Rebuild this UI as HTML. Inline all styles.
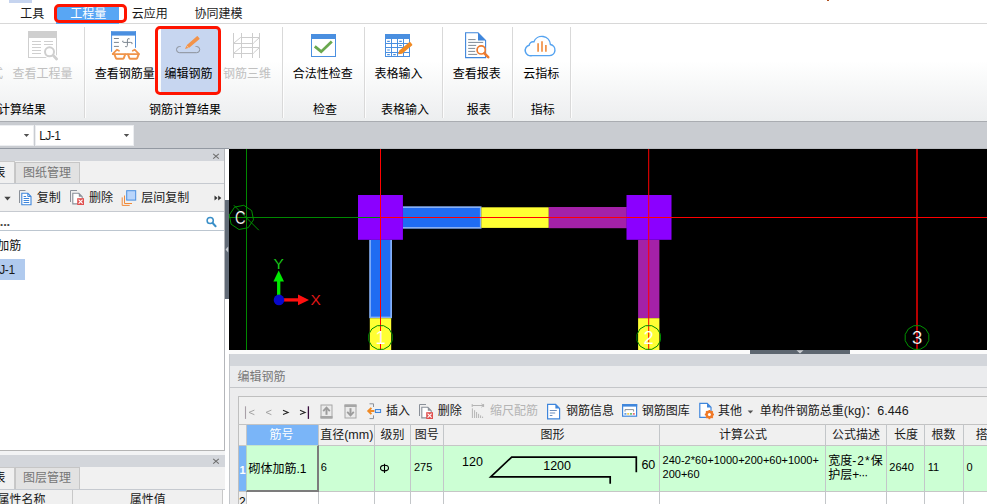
<!DOCTYPE html>
<html lang="zh-CN">
<head>
<meta charset="utf-8">
<title>编辑钢筋</title>
<style>
html,body{margin:0;padding:0;background:#fff;}
body{width:987px;height:504px;overflow:hidden;position:relative;font-family:"Liberation Sans","Noto Sans CJK SC",sans-serif;}
#app{position:absolute;left:0;top:0;width:987px;height:504px;overflow:hidden;background:#fff;}
.b{position:absolute;}
.i{position:absolute;overflow:visible;}
.t{position:absolute;white-space:nowrap;font-family:"Liberation Sans","Noto Sans CJK SC",sans-serif;}
</style>
</head>
<body>
<div id="app">
<!-- tab bar -->
<div class="b" style="left:0px;top:0px;width:987px;height:23px;background:#fff;"></div>
<div class="b" style="left:9px;top:0px;width:23px;height:2.5px;background:#c6d4ef;"></div>
<div class="b" style="left:827px;top:0px;width:2px;height:1px;background:#b0501e;"></div>
<div class="b" style="left:0px;top:23px;width:987px;height:1px;background:#d8d8d8;"></div>
<div class="t" style="left:20.2px;top:8px;font-size:12px;line-height:12px;height:12px;color:#1a1a1a;">工具</div>
<div class="b" style="left:56px;top:5px;width:63px;height:19px;background:#58a6f4;"></div>
<div class="t" style="left:70.2px;top:8px;font-size:12px;line-height:12px;height:12px;color:#fff;">工程量</div>
<div class="b" style="left:54px;top:4px;width:73px;height:19px;background:transparent;border:3px solid #ff1400;border-radius:5px;box-sizing:border-box"></div>
<div class="t" style="left:131.8px;top:8px;font-size:12px;line-height:12px;height:12px;color:#1a1a1a;">云应用</div>
<div class="t" style="left:194.4px;top:8px;font-size:12px;line-height:12px;height:12px;color:#1a1a1a;">协同建模</div>
<!-- ribbon -->
<div class="b" style="left:0px;top:24px;width:987px;height:97px;background:linear-gradient(to bottom,#ffffff 0%,#ffffff 38%,#f8f9f9 60%,#f2f3f4 80%,#eceeef 100%);"></div>
<div class="b" style="left:84px;top:27px;width:1px;height:91px;background:#d9d9d9;"></div>
<div class="b" style="left:85px;top:27px;width:1px;height:91px;background:rgba(255,255,255,.8);"></div>
<div class="b" style="left:282px;top:27px;width:1px;height:91px;background:#d9d9d9;"></div>
<div class="b" style="left:283px;top:27px;width:1px;height:91px;background:rgba(255,255,255,.8);"></div>
<div class="b" style="left:364px;top:27px;width:1px;height:91px;background:#d9d9d9;"></div>
<div class="b" style="left:365px;top:27px;width:1px;height:91px;background:rgba(255,255,255,.8);"></div>
<div class="b" style="left:442px;top:27px;width:1px;height:91px;background:#d9d9d9;"></div>
<div class="b" style="left:443px;top:27px;width:1px;height:91px;background:rgba(255,255,255,.8);"></div>
<div class="b" style="left:512px;top:27px;width:1px;height:91px;background:#d9d9d9;"></div>
<div class="b" style="left:513px;top:27px;width:1px;height:91px;background:rgba(255,255,255,.8);"></div>
<div class="b" style="left:570px;top:27px;width:1px;height:91px;background:#d9d9d9;"></div>
<div class="b" style="left:571px;top:27px;width:1px;height:91px;background:rgba(255,255,255,.8);"></div>
<div class="b" style="left:0px;top:120.5px;width:987px;height:1.5px;background:#a9acb1;"></div>
<div class="b" style="left:0px;top:122px;width:987px;height:27px;background:#c9ccd1;"></div>
<div class="t" style="left:-1.9px;top:104px;font-size:12px;line-height:12px;height:12px;color:#000;">计算结果</div>
<div class="t" style="left:149px;top:104px;font-size:12px;line-height:12px;height:12px;color:#000;">钢筋计算结果</div>
<div class="t" style="left:313px;top:104px;font-size:12px;line-height:12px;height:12px;color:#000;">检查</div>
<div class="t" style="left:381px;top:104px;font-size:12px;line-height:12px;height:12px;color:#000;">表格输入</div>
<div class="t" style="left:466.8px;top:104px;font-size:12px;line-height:12px;height:12px;color:#000;">报表</div>
<div class="t" style="left:530.8px;top:104px;font-size:12px;line-height:12px;height:12px;color:#000;">指标</div>
<div class="t" style="left:-9px;top:68px;font-size:12px;line-height:12px;height:12px;color:#c0c0c0;">式</div>
<div class="t" style="left:12.6px;top:68px;font-size:12px;line-height:12px;height:12px;color:#c0c0c0;">查看工程量</div>
<svg class="i" style="left:26px;top:29px;" width="34" height="33" viewBox="0 0 34 33">
<g fill="none" stroke="#cfcfcf" stroke-width="1">
<rect x="2.5" y="2.5" width="28" height="26" fill="#fff"/>
<rect x="2.5" y="2.5" width="28" height="6" fill="#cfcfcf"/>
<path d="M6 12.5h9M6 15.5h9M6 18.5h9M6 21.5h9M6 24.5h9M18 12.5h9M18 15.5h9"/>
<circle cx="23.5" cy="22.8" r="6.6" fill="#fff" stroke="none"/>
<path d="M27 26.2l4.6 4.8" stroke="#fff" stroke-width="5" stroke-linecap="round"/>
<circle cx="23.5" cy="22.8" r="4.5" fill="#fff" stroke-width="2"/>
<path d="M27.2 26.4l3.4 3.6" stroke-width="2.8" stroke-linecap="round"/>
</g></svg>
<div class="t" style="left:94.8px;top:68px;font-size:12px;line-height:12px;height:12px;color:#000;">查看钢筋量</div>
<svg class="i" style="left:108px;top:29px;" width="36" height="34" viewBox="0 0 36 34">
<rect x="3.1" y="2.2" width="24.9" height="4.4" fill="#4a8fe0"/>
<path d="M3.6 2.2V22.8M27.5 2.2V18.8" stroke="#4a8fe0" stroke-width="1" fill="none"/>
<path d="M5.9 9.5h5M5.9 13.4h5M5.9 17.4h5" stroke="#7d8791" stroke-width="1" fill="none"/>
<path d="M21.3 9.7q-1.9-.8-1.9 1.3V16.4q0 2.1-1.9 1.3M14.7 12q-.8 1.4 1.3 1.4H22.8q2.1 0 1.3 1.4" stroke="#7d8791" stroke-width="1" fill="none" stroke-linecap="round"/>
<g fill="none" stroke="#f0944a" stroke-width="1.9" stroke-linejoin="round" stroke-linecap="round">
<path d="M4.8 25.1H30.8"/>
<path d="M6.4 25.4L7.9 29.1q.3.7 1.1.7h5.7q.8 0 1.1-.7L17.2 25.4"/>
<path d="M20 25.4L21.4 29.1q.3.7 1.1.7h5.6q.8 0 1.1-.7L30.6 25.4"/>
<path d="M4.8 24.8L9 20.7L11 21.8M30.8 24.8L26.7 20.7L24.7 21.8" stroke-width="1.7"/>
</g></svg>
<div class="b" style="left:161px;top:27px;width:56.6px;height:66px;background:#c7d6f0;"></div>
<div class="t" style="left:164.6px;top:68px;font-size:12px;line-height:12px;height:12px;color:#000;">编辑钢筋</div>
<svg class="i" style="left:172px;top:34px;" width="34" height="22" viewBox="0 0 34 22">
<path d="M8.6 12.5h-1a3.1 3.1 0 0 0 0 6.2h17a3.1 3.1 0 0 0 0-6.2h-1" fill="none" stroke="#8a9099" stroke-width="1"/>
<path d="M12.9 15l2-4.1 10-8.6a.7.7 0 0 1 1 .1l1.5 1.8a.7.7 0 0 1-.1 1l-10.1 8.5z" fill="#f2934a"/><path d="M14.6 11.6l2 2.3" stroke="#fbd9bd" stroke-width=".7"/>
</svg>
<div class="b" style="left:155px;top:26px;width:66px;height:69px;background:transparent;border:3px solid #ff1400;border-radius:5px;box-sizing:border-box"></div>
<div class="t" style="left:223px;top:68px;font-size:12px;line-height:12px;height:12px;color:#c0c0c0;">钢筋三维</div>
<svg class="i" style="left:230px;top:31px;" width="34" height="29" viewBox="0 0 34 29">
<g fill="none" stroke="#cdcdcd" stroke-width="1">
<path d="M3.5 2v25M11.5 2v25M22.5 2v25M29.5 2v25"/>
<path d="M10.5 6.5h19M3.5 12.5h20M10.5 16.5h19M3.5 22.5h20" stroke-width="1.2"/>
<path d="M4 12l6.5-5.5M23.5 12l6-5.5M4 22l6.5-5.5M23.5 22l6-5.5" stroke-width="1"/>
</g></svg>
<div class="t" style="left:292.8px;top:68px;font-size:12px;line-height:12px;height:12px;color:#000;">合法性检查</div>
<svg class="i" style="left:309px;top:32px;" width="30" height="27" viewBox="0 0 30 27">
<rect x="2.5" y="2.5" width="24" height="22" fill="#fff" stroke="#4a8fe0"/>
<rect x="2" y="2" width="25" height="5" fill="#4a8fe0"/>
<path d="M5.8 14.4l6.4 5.3 10.6-10.2" fill="none" stroke="#6aa84f" stroke-width="2.8"/>
</svg>
<div class="t" style="left:374.6px;top:68px;font-size:12px;line-height:12px;height:12px;color:#000;">表格输入</div>
<svg class="i" style="left:383px;top:32px;" width="32" height="27" viewBox="0 0 32 27">
<rect x="2.5" y="2.5" width="24" height="22" fill="#fff" stroke="#4a8fe0"/>
<rect x="2" y="2" width="25" height="5" fill="#4a8fe0"/>
<path d="M8.5 7v18M14.5 7v18M20.5 7v18M2 11.5h25M2 15.5h25M2 20.5h25" stroke="#4a8fe0" stroke-width="1" fill="none"/>
<path d="M4.2 9.3h2.6M16.2 9.3h2.6M16.2 13.5h2.6M4.2 18h2.6M4.2 22.6h2.6M10.2 22.6h2.6" stroke="#4a8fe0" stroke-width="1.2" fill="none"/>
<path d="M15 22.3l1.3-3.9 9.9-8.2a.9.9 0 0 1 1.3.1l1.6 1.9a.9.9 0 0 1-.1 1.3l-9.9 8.2z" fill="#f08a24"/>
</svg>
<div class="t" style="left:452.8px;top:68px;font-size:12px;line-height:12px;height:12px;color:#000;">查看报表</div>
<svg class="i" style="left:463px;top:30px;" width="30" height="31" viewBox="0 0 30 31">
<path d="M2.6 2.8h12.4l7.6 7.6v17.2h-20z" fill="#fff" stroke="#3f86dc" stroke-width="1.1"/>
<path d="M15 2.8l7.6 7.6h-7.6z" fill="#3f86dc"/>
<path d="M5.2 9.6h7.4M5.2 12.4h15M5.2 15.4h8M5.2 18.4h7M5.2 21.4h7M5.2 24.4h9" stroke="#7f8a96" stroke-width="1" fill="none"/>
<circle cx="18.2" cy="19.9" r="4.1" fill="#fff" stroke="#ee7b2e" stroke-width="1.7"/>
<path d="M21.4 23.3l3.8 3.9" stroke="#ee7b2e" stroke-width="2.6" stroke-linecap="round"/>
</svg>
<div class="t" style="left:523.2px;top:68px;font-size:12px;line-height:12px;height:12px;color:#000;">云指标</div>
<svg class="i" style="left:522px;top:32px;" width="36" height="27" viewBox="0 0 36 27">
<path d="M10 23.6h17.2a5.6 5.6 0 0 0 1.2-11.1a8.6 8.6 0 0 0-16.6-2.6a3.7 3.7 0 0 0-4.6 3.3a5.3 5.3 0 0 0 2.8 10.4z" fill="#fff" stroke="#55a3f0" stroke-width="1.45"/>
<path d="M16.1 11.2v8.6M20 9.2v10.6M23.9 13v6.8" stroke="#f08a3a" stroke-width="1.6" fill="none"/>
</svg>
<!-- selector row -->
<div class="b" style="left:-2px;top:124.5px;width:36px;height:21.7px;background:#fff;border:1px solid #eceef1;box-sizing:border-box"></div>
<div class="b" style="left:35.4px;top:124.5px;width:99px;height:21.7px;background:#fff;border:1px solid #eceef1;box-sizing:border-box"></div>
<svg class="i" style="left:23px;top:133px;" width="7" height="5" viewBox="0 0 7 5"><path d="M0.8 0.9h5.4L3.5 4.1z" fill="#505050"/></svg>
<svg class="i" style="left:122.9px;top:133px;" width="7" height="5" viewBox="0 0 7 5"><path d="M0.8 0.9h5.4L3.5 4.1z" fill="#505050"/></svg>
<div class="t" style="left:39.2px;top:129.5px;font-size:12px;line-height:12px;height:12px;color:#1a1a1a;letter-spacing:-0.5px">LJ-1</div>
<!-- left panel -->
<div class="b" style="left:0px;top:148px;width:229px;height:1px;background:#9399a2;"></div>
<div class="b" style="left:229px;top:148px;width:758px;height:1px;background:#b9bcc1;"></div>
<div class="b" style="left:0px;top:149px;width:229px;height:355px;background:#fff;"></div>
<div class="b" style="left:0px;top:149px;width:224.5px;height:12px;background:#d3d6db;"></div>
<svg class="i" style="left:212px;top:151.5px;" width="8" height="8" viewBox="0 0 8 8"><path d="M1.2 1.8l5.6 4.8M6.8 1.8l-5.6 4.8" stroke="#6e6e6e" stroke-width="1.1" fill="none"/></svg>
<div class="b" style="left:0px;top:161px;width:224.5px;height:22.5px;background:#f1f1f1;"></div>
<div class="b" style="left:-2px;top:161px;width:16.5px;height:23px;background:#f0f0f0;border:1px solid #c8c8c8;box-sizing:border-box"></div>
<div class="b" style="left:14.5px;top:161.5px;width:65.5px;height:22px;background:#e2e2e2;border:1px solid #c6c6c6;border-bottom:none;box-sizing:border-box"></div>
<div class="t" style="left:-6.4px;top:166.5px;font-size:12px;line-height:12px;height:12px;color:#000;">表</div>
<div class="t" style="left:23px;top:166.5px;font-size:12px;line-height:12px;height:12px;color:#767676;">图纸管理</div>
<div class="b" style="left:0px;top:183px;width:224.5px;height:1px;background:#c6cad0;"></div>
<div class="b" style="left:0px;top:184px;width:224.5px;height:27.5px;background:#f0f0f0;"></div>
<div class="b" style="left:0px;top:211px;width:224.5px;height:1px;background:#c6cad0;"></div>
<div class="b" style="left:0px;top:212px;width:224.5px;height:18.5px;background:#fff;"></div>
<div class="b" style="left:0px;top:230px;width:224.5px;height:1px;background:#bcc6d0;"></div>
<div class="b" style="left:0px;top:231px;width:224.5px;height:219px;background:#fff;"></div>
<div class="b" style="left:0px;top:450px;width:224.5px;height:1px;background:#b4b4b4;"></div>
<div class="b" style="left:224px;top:149px;width:1px;height:355px;background:#b4b6ba;"></div>
<div class="b" style="left:225px;top:200px;width:4px;height:99.4px;background:#626b77;"></div>
<svg class="i" style="left:225px;top:246px;" width="4" height="7" viewBox="0 0 4 7"><path d="M3.2 0.5L0.6 3.5L3.2 6.5z" fill="#c9ccd1"/></svg>
<svg class="i" style="left:4px;top:196px;" width="7" height="5" viewBox="0 0 7 5"><path d="M0.3 0.8h6.4L3.5 4.4z" fill="#444"/></svg>
<svg class="i" style="left:18px;top:189px;" width="15" height="17" viewBox="0 0 15 17">
<path d="M1.5 14V1.5h6" fill="none" stroke="#8a9099" stroke-width="1"/>
<path d="M3.8 4.3h6l3.2 3.2v8.2h-9.2z" fill="#fff" stroke="#3f86dc" stroke-width="1.1"/>
<path d="M9.8 4.3v3.2h3.2" fill="none" stroke="#3f86dc" stroke-width="1"/>
<path d="M5.6 9.5h5.6M5.6 11.5h5.6M5.6 13.5h5.6M5.6 7.5h2.5" stroke="#3f86dc" stroke-width="1" fill="none"/>
</svg>
<div class="t" style="left:36.8px;top:192.3px;font-size:12px;line-height:12px;height:12px;color:#1a1a1a;">复制</div>
<svg class="i" style="left:69px;top:189px;" width="16" height="17" viewBox="0 0 16 17">
<path d="M1.5 13V1.5h6.5" fill="none" stroke="#8a9099" stroke-width="1"/>
<path d="M3.8 4.3h6l3.4 3.4v7.2h-9.4z" fill="#fff" stroke="#8a9099" stroke-width="1.1"/>
<path d="M9.8 4.3v3.4h3.4z" fill="#8a9099"/>
<rect x="8.2" y="9.2" width="6.8" height="6.8" fill="#e0504f"/>
<path d="M9.6 10.6l4 4M13.6 10.6l-4 4" stroke="#fff" stroke-width="1.1"/>
</svg>
<div class="t" style="left:88.9px;top:192.3px;font-size:12px;line-height:12px;height:12px;color:#1a1a1a;">删除</div>
<svg class="i" style="left:121px;top:189px;" width="16" height="17" viewBox="0 0 16 17">
<path d="M3.5 6.5v8h7.5M1.2 8.4v8h7.5" fill="none" stroke="#f08a3a" stroke-width="1"/>
<rect x="5.7" y="1.7" width="9" height="9.4" fill="#b9d5fb" stroke="#4a8fe0" stroke-width="1"/>
</svg>
<div class="t" style="left:141.2px;top:192.3px;font-size:12px;line-height:12px;height:12px;color:#1a1a1a;">层间复制</div>
<svg class="i" style="left:213.5px;top:194.5px;" width="8" height="6" viewBox="0 0 8 6"><path d="M0.5 0.4L3.6 3L0.5 5.6zM4.2 0.4L7.3 3L4.2 5.6z" fill="#333"/></svg>
<div class="t" style="left:-0.2px;top:214.8px;font-size:13px;line-height:13px;height:13px;color:#4a4a4a;font-weight:bold;letter-spacing:-0.25px">...</div>
<svg class="i" style="left:205px;top:215px;" width="13" height="13" viewBox="0 0 13 13">
<circle cx="5.2" cy="5.5" r="3.1" fill="none" stroke="#3a8fc8" stroke-width="1.5"/>
<path d="M7.6 8l3 3.2" stroke="#3a8fc8" stroke-width="2" stroke-linecap="round"/>
</svg>
<div class="t" style="left:-2.8px;top:239.6px;font-size:12px;line-height:12px;height:12px;color:#111;">加筋</div>
<div class="b" style="left:0px;top:259px;width:25px;height:20.7px;background:#b0caee;"></div>
<div class="t" style="left:-7px;top:264.2px;font-size:12px;line-height:12px;height:12px;color:#1a1a1a;letter-spacing:-0.4px">LJ-1</div>
<div class="b" style="left:0px;top:451px;width:224.5px;height:4px;background:#f2f3f4;"></div>
<div class="b" style="left:0px;top:455px;width:224.5px;height:11.5px;background:#d3d6db;"></div>
<svg class="i" style="left:212px;top:457.2px;" width="8" height="8" viewBox="0 0 8 8"><path d="M1.2 1.8l5.6 4.8M6.8 1.8l-5.6 4.8" stroke="#6e6e6e" stroke-width="1.1" fill="none"/></svg>
<div class="b" style="left:0px;top:466.5px;width:224.5px;height:23px;background:#f1f1f1;"></div>
<div class="b" style="left:-2px;top:466.5px;width:16.5px;height:23px;background:#f0f0f0;border:1px solid #c8c8c8;box-sizing:border-box"></div>
<div class="b" style="left:14.5px;top:467px;width:65.5px;height:22.5px;background:#e2e2e2;border:1px solid #c6c6c6;border-bottom:none;box-sizing:border-box"></div>
<div class="t" style="left:-6.4px;top:472.3px;font-size:12px;line-height:12px;height:12px;color:#000;">表</div>
<div class="t" style="left:23px;top:472.3px;font-size:12px;line-height:12px;height:12px;color:#767676;">图层管理</div>
<div class="b" style="left:0px;top:489px;width:224.5px;height:1px;background:#c6cad0;"></div>
<div class="b" style="left:0px;top:490px;width:222px;height:14px;background:#f0f0f0;"></div>
<div class="b" style="left:222px;top:490px;width:2.5px;height:14px;background:#fff;"></div>
<div class="b" style="left:72px;top:490px;width:1px;height:14px;background:#c8c8c8;"></div>
<div class="b" style="left:221.5px;top:490px;width:1px;height:14px;background:#c8c8c8;"></div>
<div class="t" style="left:-2.6px;top:494px;font-size:12px;line-height:12px;height:12px;color:#1a1a1a;">属性名称</div>
<div class="t" style="left:129.8px;top:494px;font-size:12px;line-height:12px;height:12px;color:#1a1a1a;">属性值</div>
<!-- canvas -->
<svg class="i" style="left:229px;top:149px;" width="758" height="201" viewBox="0 0 758 201"><rect x="0" y="0" width="758" height="201" fill="#000" /><rect x="173.9" y="57.3" width="78.6" height="22.4" fill="#86b0f6" /><rect x="173.9" y="59" width="77" height="19" fill="#1f6cf2" /><rect x="252.3" y="58.3" width="67.5" height="20.6" fill="#ffff33" /><rect x="319.8" y="58" width="78" height="21.2" fill="#a421a8" /><rect x="140.2" y="90.8" width="22.8" height="78.4" fill="#86b0f6" /><rect x="141.9" y="90.8" width="19.4" height="76.8" fill="#1f6cf2" /><rect x="140.8" y="169.2" width="21.4" height="32" fill="#ffff33" /><rect x="409.1" y="90.8" width="21.3" height="78.4" fill="#a421a8" /><rect x="409.1" y="169.2" width="21.3" height="32" fill="#ffff33" /><rect x="129" y="46" width="44.9" height="44.8" fill="#8b00ff" /><rect x="397.5" y="46" width="45" height="44.8" fill="#8b00ff" /><rect x="17" y="0" width="1" height="201" fill="#008800" /><rect x="0" y="68" width="151" height="1" fill="#008800" /><rect x="151" y="0" width="1" height="201" fill="#ff0000" /><rect x="419.2" y="0" width="1" height="201" fill="#ff0000" /><rect x="687" y="0" width="2" height="201" fill="#b60000" /><rect x="151" y="68" width="607" height="1" fill="#ff0000" /><polygon points="24.5,70.8 19.2,78.7 10.0,80.5 2.1,75.2 0.3,66.0 5.6,58.1 14.8,56.3 22.7,61.6" fill="none" stroke="#009000" stroke-width="1"/><path d="M4.8 56.2L29.8 81.2" stroke="#009000" stroke-width="1" fill="none"/><polygon points="163.3,191.6 160.1,197.1 154.7,200.3 148.4,200.3 142.9,197.1 139.7,191.7 139.7,185.4 142.9,179.9 148.3,176.7 154.6,176.7 160.1,179.9 163.3,185.3" fill="none" stroke="#008a00" stroke-width="1"/><polygon points="431.5,191.6 428.3,197.1 422.9,200.3 416.6,200.3 411.1,197.1 407.9,191.7 407.9,185.4 411.1,179.9 416.5,176.7 422.8,176.7 428.3,179.9 431.5,185.3" fill="none" stroke="#008a00" stroke-width="1"/><polygon points="699.8,191.6 696.6,197.1 691.2,200.3 684.9,200.3 679.4,197.1 676.2,191.7 676.2,185.4 679.4,179.9 684.8,176.7 691.1,176.7 696.6,179.9 699.8,185.3" fill="none" stroke="#009000" stroke-width="1"/><path d="M49.7 151L49.7 131" stroke="#00e800" stroke-width="3.3" fill="none"/><path d="M49.7 121.4l-5.3 11h10.6z" fill="#00e800"/><path d="M50 150.9L69.5 150.9" stroke="#ff1010" stroke-width="3.3" fill="none"/><path d="M80 150.9l-11 -5.3v10.6z" fill="#ff1010"/><circle cx="50" cy="150.9" r="5.3" fill="#0808cc"/></svg>
<div class="t" style="left:235.4px;top:210px;font-size:17.5px;line-height:17.5px;height:17.5px;color:#fff;-webkit-text-stroke:0.22px #000;transform:scaleX(.84);transform-origin:0 0">C</div>
<div class="t" style="left:375.4px;top:329px;font-size:18.5px;line-height:18.5px;height:18.5px;color:#fff;-webkit-text-stroke:0.22px #ffff33;">1</div>
<div class="t" style="left:643.6px;top:329px;font-size:18.5px;line-height:18.5px;height:18.5px;color:#fff;-webkit-text-stroke:0.22px #ffff33;">2</div>
<div class="t" style="left:912px;top:329px;font-size:18.5px;line-height:18.5px;height:18.5px;color:#fff;-webkit-text-stroke:0.22px #000;">3</div>
<div class="t" style="left:273.6px;top:255.8px;font-size:15.5px;line-height:15.5px;height:15.5px;color:#1ee01e;-webkit-text-stroke:0.22px #000;">Y</div>
<div class="t" style="left:310.4px;top:292.4px;font-size:15.5px;line-height:15.5px;height:15.5px;color:#ff1a1a;-webkit-text-stroke:0.22px #000;">X</div>
<!-- bottom panel -->
<div class="b" style="left:229px;top:350px;width:758px;height:4.5px;background:#fbfbfb;"></div>
<div class="b" style="left:750px;top:349.5px;width:100px;height:4.5px;background:#5d6670;"></div>
<svg class="i" style="left:796px;top:349.5px;" width="8" height="4" viewBox="0 0 8 4"><path d="M0.5 0.3h7L4 3.6z" fill="#c9ccd1"/></svg>
<div class="b" style="left:229px;top:354px;width:758px;height:11.5px;background:#d3d6db;"></div>
<div class="b" style="left:229px;top:365.5px;width:758px;height:22px;background:#ebecee;"></div>
<div class="b" style="left:229px;top:354px;width:1px;height:150px;background:#c3c6ca;"></div>
<div class="t" style="left:237.6px;top:370.6px;font-size:12px;line-height:12px;height:12px;color:#787878;">编辑钢筋</div>
<div class="b" style="left:229px;top:387px;width:758px;height:1px;background:#c4c6c9;"></div>
<div class="b" style="left:230px;top:388px;width:757px;height:116px;background:#ececed;"></div>
<div class="b" style="left:238px;top:396px;width:749px;height:108px;background:#f0f0f0;border-left:1px solid #bfbfbf;border-top:1px solid #bfbfbf;box-sizing:border-box"></div>
<svg class="i" style="left:244px;top:404px;" width="68" height="17" viewBox="0 0 68 17">
<path d="M1.5 2.3v12.6" stroke="#a9a0a8" stroke-width="1.1"/>
<path d="M10.4 6.1L5 8.4l5.4 2.3M27.4 6.1L22 8.4l5.4 2.3" fill="none" stroke="#a4a4a4" stroke-width="1"/>
<path d="M39 6.2l5.2 2.2-5.2 2.2M56 6.2l5.2 2.2-5.2 2.2" fill="none" stroke="#222" stroke-width="1.05"/>
<path d="M64.4 2.3v12.6" stroke="#3a1040" stroke-width="1.3"/>
</svg>
<svg class="i" style="left:319.5px;top:403.5px;" width="13" height="15" viewBox="0 0 13 15">
<rect x="1" y="1" width="11" height="13" fill="#ebebeb" stroke="#a6a6a6" stroke-width="1"/>
<rect x="0.5" y="12" width="12" height="2.5" fill="#a6a6a6"/>
<path d="M6.5 10.8V4.4" fill="none" stroke="#9c9c9c" stroke-width="2"/>
<path d="M3.2 7.2L6.5 3.6l3.3 3.6" fill="none" stroke="#9c9c9c" stroke-width="1.8"/>
</svg>
<svg class="i" style="left:343.5px;top:403.5px;" width="13" height="15" viewBox="0 0 13 15">
<rect x="1" y="1" width="11" height="13" fill="#ebebeb" stroke="#a6a6a6" stroke-width="1"/>
<rect x="0.5" y="0.5" width="12" height="2.5" fill="#a6a6a6"/>
<path d="M6.5 4.2v6.4" fill="none" stroke="#9c9c9c" stroke-width="2"/>
<path d="M3.2 7.8L6.5 11.4l3.3-3.6" fill="none" stroke="#9c9c9c" stroke-width="1.8"/>
</svg>
<svg class="i" style="left:367px;top:402px;" width="15" height="18" viewBox="0 0 15 18">
<path d="M2.5 1.8h4v3.2M2.5 16.6h4v-3.2" fill="none" stroke="#8a9099" stroke-width="1"/>
<path d="M1.4 9h6M4.4 5.8L1.2 9l3.2 3.2" fill="none" stroke="#f08a24" stroke-width="1.9"/>
<rect x="8.4" y="7.5" width="5.2" height="3" fill="#cfe2fb" stroke="#3f86dc" stroke-width="1"/>
</svg>
<div class="t" style="left:386px;top:405.2px;font-size:12px;line-height:12px;height:12px;color:#1a1a1a;">插入</div>
<svg class="i" style="left:417.5px;top:402.5px;" width="16" height="17" viewBox="0 0 16 17">
<path d="M1.5 13V1.5h6.5" fill="none" stroke="#8a9099" stroke-width="1"/>
<path d="M3.8 4.3h6l3.4 3.4v7.2h-9.4z" fill="#fff" stroke="#8a9099" stroke-width="1.1"/>
<path d="M9.8 4.3v3.4h3.4z" fill="#8a9099"/>
<rect x="8.2" y="9.2" width="6.8" height="6.8" fill="#e0504f"/>
<path d="M9.6 10.6l4 4M13.6 10.6l-4 4" stroke="#fff" stroke-width="1.1"/>
</svg>
<div class="t" style="left:437.8px;top:405.2px;font-size:12px;line-height:12px;height:12px;color:#1a1a1a;">删除</div>
<svg class="i" style="left:471px;top:403px;" width="14" height="16" viewBox="0 0 14 16">
<g fill="none" stroke="#b4b4b4" stroke-width="1">
<path d="M1.2 1v3M12.6 1v3M1.2 2.5h11.4M10.4 0.8l2 1.7-2 1.7"/>
<path d="M1.4 5.4v9.6M3.6 7.2v7.8M5.6 9v6M7.6 10.8v4.2M9.6 12.4v2.6M11.6 13.6v1.4"/>
</g></svg>
<div class="t" style="left:490px;top:405.2px;font-size:12px;line-height:12px;height:12px;color:#b4b4b4;">缩尺配筋</div>
<svg class="i" style="left:546px;top:402.5px;" width="15" height="17" viewBox="0 0 15 17">
<path d="M1.6 1.4h8l4 4v10.4h-12z" fill="#fff" stroke="#3f86dc" stroke-width="1.2"/>
<path d="M9.4 1.2l4.4 4.4h-4.4z" fill="#3f86dc"/>
<path d="M3.8 7.5h7M3.8 10h5.4M3.8 12.5h2.6" stroke="#6d8fbd" stroke-width="1" fill="none"/>
</svg>
<div class="t" style="left:565.9px;top:405.2px;font-size:12px;line-height:12px;height:12px;color:#1a1a1a;">钢筋信息</div>
<svg class="i" style="left:621px;top:403px;" width="17" height="15" viewBox="0 0 17 15">
<rect x="1.6" y="1.6" width="14" height="11.6" fill="#fff" stroke="#3f86dc" stroke-width="1.2"/>
<rect x="1" y="1" width="15.2" height="2.6" fill="#3f86dc"/>
<path d="M4 8.6v-2h8.6v2" fill="none" stroke="#8a9099" stroke-width="1"/>
<rect x="3.4" y="10.2" width="2" height="1.4" fill="#3f86dc"/><rect x="6.2" y="10.2" width="2" height="1.4" fill="#f0c020"/><rect x="9" y="10.2" width="2" height="1.4" fill="#50b050"/><rect x="11.8" y="10.2" width="2" height="1.4" fill="#e05050"/>
</svg>
<div class="t" style="left:641.8px;top:405.2px;font-size:12px;line-height:12px;height:12px;color:#1a1a1a;">钢筋图库</div>
<svg class="i" style="left:697.5px;top:402px;" width="18" height="18" viewBox="0 0 18 18">
<path d="M1.8 1.4h7.4l3.8 3.8v10.2h-11.2z" fill="#fff" stroke="#3f86dc" stroke-width="1.2"/>
<path d="M9 1.2l4.2 4.2h-4.2z" fill="#3f86dc"/>
<circle cx="11.4" cy="12.6" r="2.9" fill="#f0f0f0" stroke="#f07a28" stroke-width="2.2"/>
<path d="M11.4 8v9.2M6.8 12.6h9.2M8.1 9.3l6.6 6.6M14.7 9.3l-6.6 6.6" stroke="#f07a28" stroke-width="1.5"/>
<circle cx="11.4" cy="12.6" r="1.5" fill="#fff"/>
</svg>
<div class="t" style="left:718px;top:405.2px;font-size:12px;line-height:12px;height:12px;color:#1a1a1a;">其他</div>
<svg class="i" style="left:747px;top:409.5px;" width="7" height="4" viewBox="0 0 7 4"><path d="M0.6 0.4h5.6L3.4 3.4z" fill="#555"/></svg>
<div class="t" style="left:759.8px;top:405.2px;font-size:12px;line-height:12px;height:12px;color:#1a1a1a;">单构件钢筋总重<span style="font-size:12.5px">(kg)</span>：<span style="font-size:12.5px">6.446</span></div>
<div class="b" style="left:238px;top:424px;width:749px;height:1px;background:#c3c3c3;"></div>
<div class="b" style="left:239px;top:425px;width:748px;height:20px;background:#f0f0f0;"></div>
<div class="b" style="left:245.5px;top:424.5px;width:73px;height:21px;background:#7ab5f8;"></div>
<div class="b" style="left:239px;top:445px;width:748px;height:46px;background:#ccffd4;"></div>
<div class="b" style="left:239px;top:491px;width:748px;height:13px;background:#fff;"></div>
<div class="b" style="left:239px;top:445.5px;width:7px;height:45.5px;background:#7ab5f8;"></div>
<div class="b" style="left:239px;top:491.5px;width:6.5px;height:13px;background:#f0f0f0;"></div>
<div class="b" style="left:239px;top:445px;width:748px;height:1px;background:#c6c6c6;"></div>
<div class="b" style="left:239px;top:490.5px;width:748px;height:1px;background:#c6c6c6;"></div>
<div class="b" style="left:245.5px;top:424px;width:1px;height:80px;background:#c3c6c9;"></div>
<div class="b" style="left:318px;top:424px;width:1px;height:80px;background:#c3c6c9;"></div>
<div class="b" style="left:374px;top:424px;width:1px;height:80px;background:#c3c6c9;"></div>
<div class="b" style="left:410px;top:424px;width:1px;height:80px;background:#c3c6c9;"></div>
<div class="b" style="left:443px;top:424px;width:1px;height:80px;background:#c3c6c9;"></div>
<div class="b" style="left:659px;top:424px;width:1px;height:80px;background:#c3c6c9;"></div>
<div class="b" style="left:825.2px;top:424px;width:1px;height:80px;background:#c3c6c9;"></div>
<div class="b" style="left:886px;top:424px;width:1px;height:80px;background:#c3c6c9;"></div>
<div class="b" style="left:924px;top:424px;width:1px;height:80px;background:#c3c6c9;"></div>
<div class="b" style="left:963px;top:424px;width:1px;height:80px;background:#c3c6c9;"></div>
<div class="b" style="left:245.5px;top:445px;width:73.5px;height:46.5px;background:transparent;border:1px solid #b9d6c0;border-top-color:#c4e4cc;border-right:2px solid #7c7c7c;border-bottom:2px solid #7c7c7c;box-sizing:border-box"></div>
<div class="t" style="left:269.6px;top:428.8px;font-size:12px;line-height:12px;height:12px;color:#fff;">筋号</div>
<div class="t" style="left:320.2px;top:428.8px;font-size:12px;line-height:12px;height:12px;color:#1a1a1a;">直径<span style="font-size:12.5px">(mm)</span></div>
<div class="t" style="left:380.4px;top:428.8px;font-size:12px;line-height:12px;height:12px;color:#1a1a1a;">级别</div>
<div class="t" style="left:414.8px;top:428.8px;font-size:12px;line-height:12px;height:12px;color:#1a1a1a;">图号</div>
<div class="t" style="left:540.4px;top:428.8px;font-size:12px;line-height:12px;height:12px;color:#1a1a1a;">图形</div>
<div class="t" style="left:719px;top:428.8px;font-size:12px;line-height:12px;height:12px;color:#1a1a1a;">计算公式</div>
<div class="t" style="left:832px;top:428.8px;font-size:12px;line-height:12px;height:12px;color:#1a1a1a;">公式描述</div>
<div class="t" style="left:894px;top:428.8px;font-size:12px;line-height:12px;height:12px;color:#1a1a1a;">长度</div>
<div class="t" style="left:931.6px;top:428.8px;font-size:12px;line-height:12px;height:12px;color:#1a1a1a;">根数</div>
<div class="t" style="left:975.8px;top:428.8px;font-size:12px;line-height:12px;height:12px;color:#1a1a1a;">搭</div>
<div class="t" style="left:239.4px;top:464.5px;font-size:11px;line-height:11px;height:11px;color:#fff;font-weight:bold">1</div>
<div class="t" style="left:248.5px;top:463.2px;font-size:12px;line-height:12px;height:12px;color:#000;">砌体加筋.1</div>
<div class="t" style="left:320.8px;top:462.3px;font-size:11px;line-height:11px;height:11px;color:#000;">6</div>
<svg class="i" style="left:379px;top:463px;" width="11" height="12" viewBox="0 0 11 12"><ellipse cx="5.5" cy="5.1" rx="4" ry="2.8" fill="none" stroke="#000" stroke-width="1.1"/><path d="M5.5 0.8v9.2" stroke="#000" stroke-width="1.1"/></svg>
<div class="t" style="left:414px;top:462.3px;font-size:11px;line-height:11px;height:11px;color:#000;">275</div>
<div class="t" style="left:462px;top:456.2px;font-size:12.5px;line-height:12.5px;height:12.5px;color:#000;">120</div>
<div class="t" style="left:543.2px;top:460px;font-size:12.5px;line-height:12.5px;height:12.5px;color:#000;">1200</div>
<div class="t" style="left:641.4px;top:459px;font-size:12.5px;line-height:12.5px;height:12.5px;color:#000;">60</div>
<svg class="i" style="left:486px;top:452px;" width="156" height="36" viewBox="0 0 156 36"><path d="M150.3 20.3V5.1H25.7L4.7 24.9H124.2V31.7" fill="none" stroke="#000" stroke-width="1.7"/></svg>
<div class="t" style="left:662.6px;top:455.2px;font-size:11px;line-height:11px;height:11px;color:#000;">240-2*60+1000+200+60+1000+</div>
<div class="t" style="left:662.6px;top:468.6px;font-size:11px;line-height:11px;height:11px;color:#000;">200+60</div>
<div class="t" style="left:828.2px;top:455px;font-size:12px;line-height:12px;height:12px;color:#000;">宽度<span style="font-size:12px;letter-spacing:1.1px">-2*</span>保</div>
<div class="t" style="left:828.2px;top:468.6px;font-size:12px;line-height:12px;height:12px;color:#000;">护层<span style="font-size:12px;letter-spacing:-1px">+···</span></div>
<div class="t" style="left:889.3px;top:462.3px;font-size:11px;line-height:11px;height:11px;color:#000;">2640</div>
<div class="t" style="left:927.8px;top:462.3px;font-size:11px;line-height:11px;height:11px;color:#000;">11</div>
<div class="t" style="left:966.4px;top:462.3px;font-size:11px;line-height:11px;height:11px;color:#000;">0</div>
<div class="t" style="left:239.1px;top:496px;font-size:12px;line-height:12px;height:12px;color:#000;">2</div>
</div>
</body>
</html>
